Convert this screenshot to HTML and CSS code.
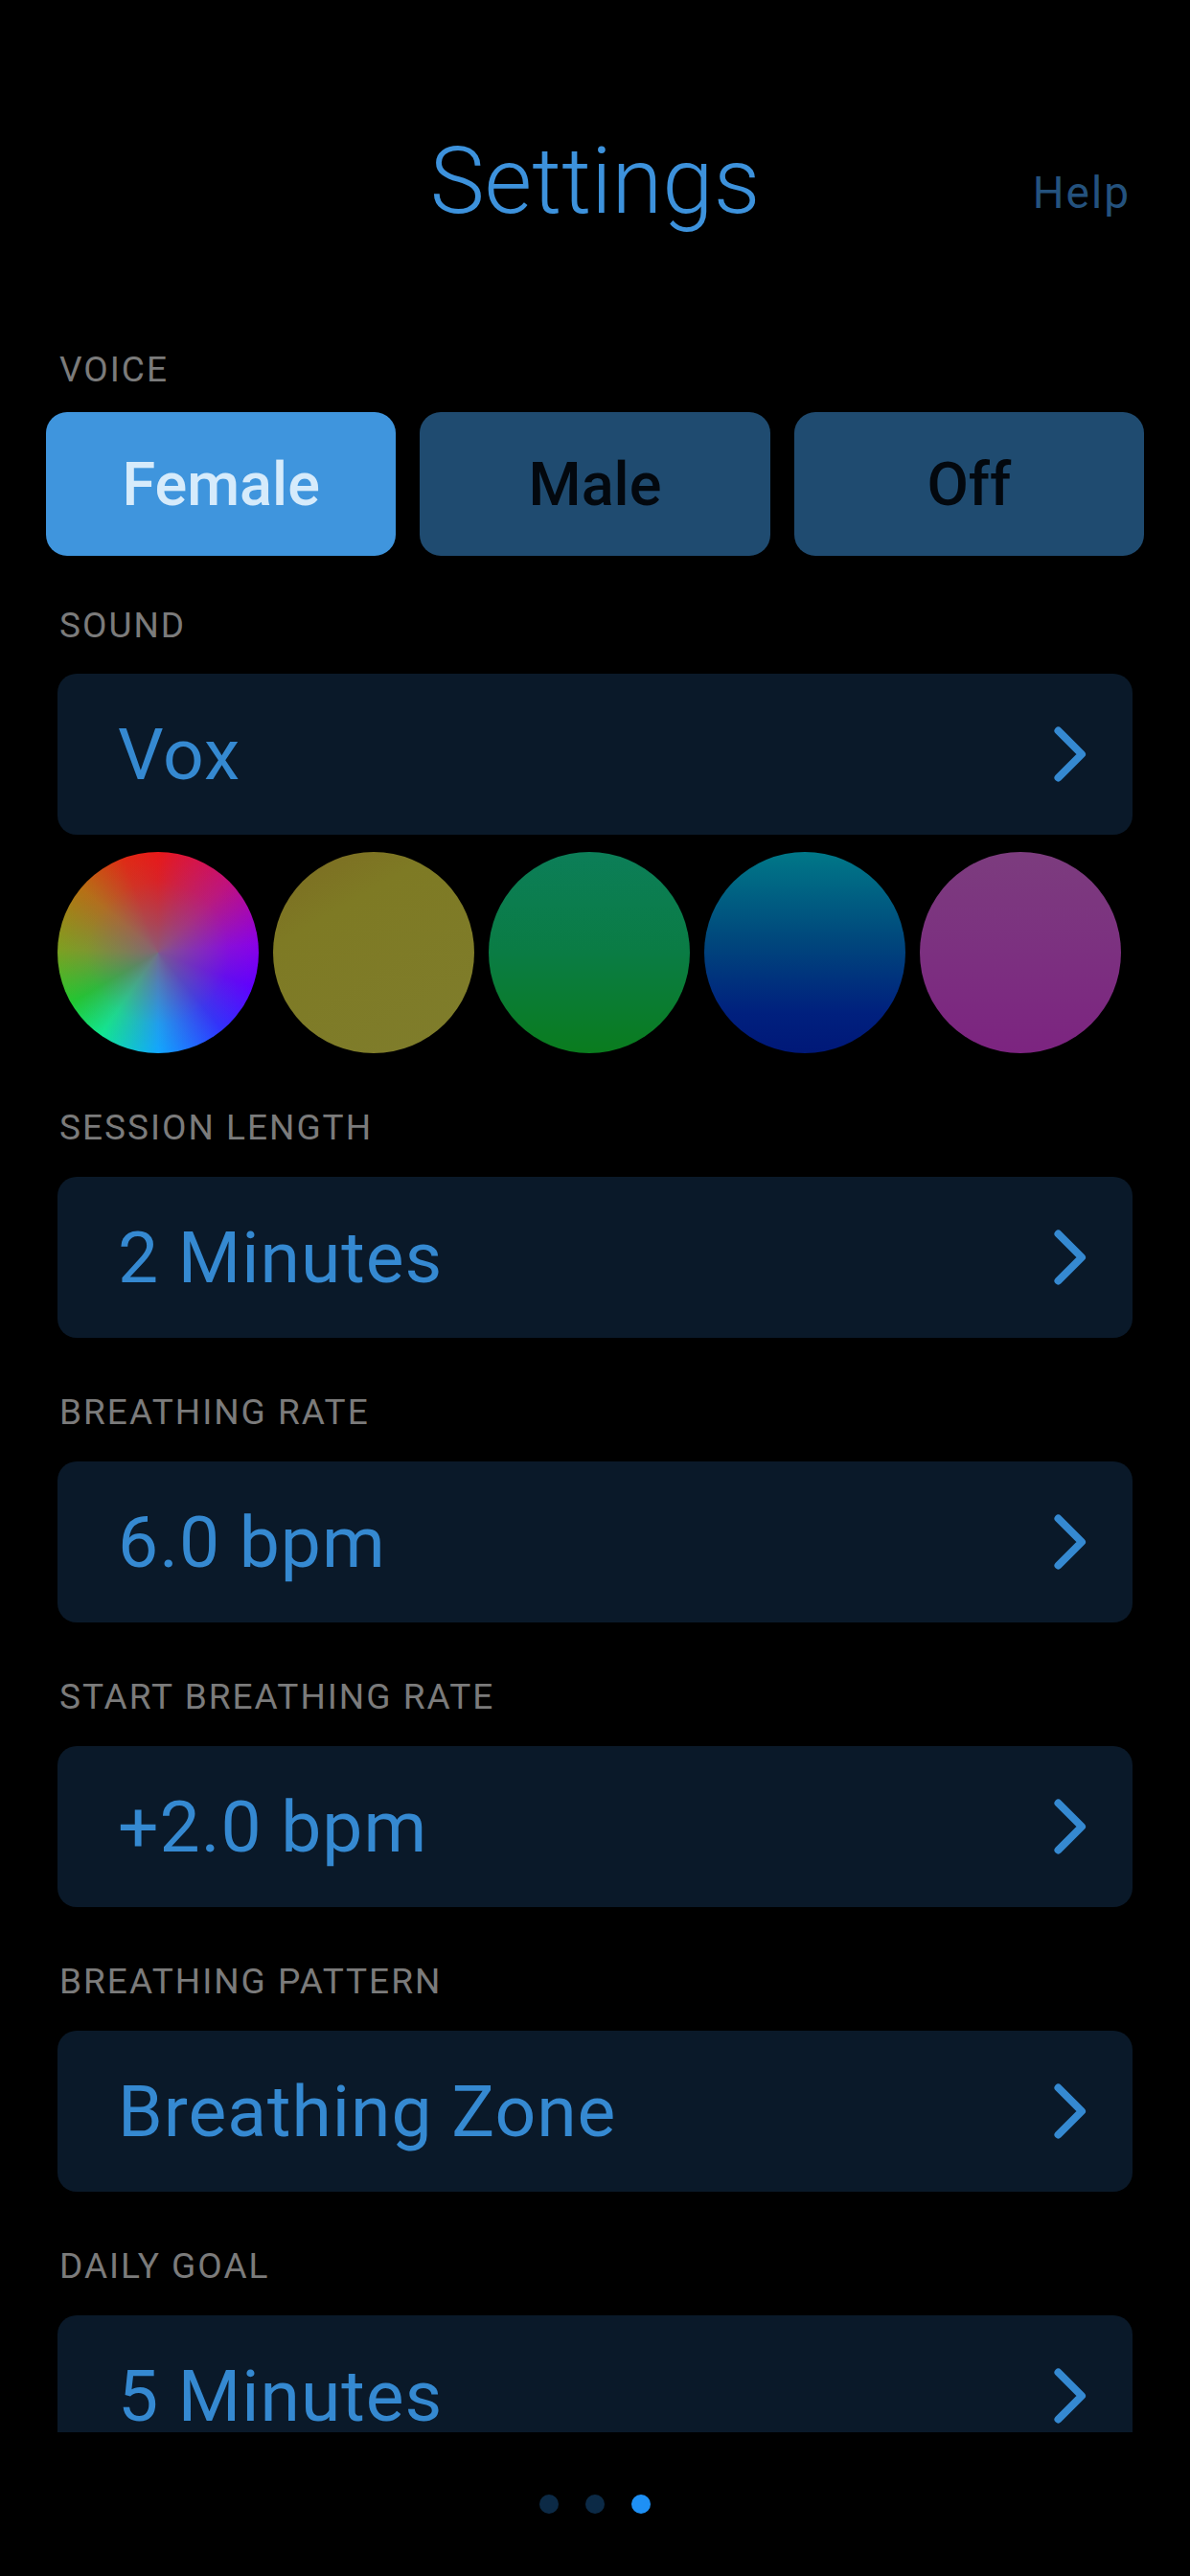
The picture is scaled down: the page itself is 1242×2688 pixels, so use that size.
FILE: index.html
```html
<!DOCTYPE html>
<html lang="en">
<head>
  <meta charset="UTF-8" />
  <meta name="viewport" content="width=device-width, initial-scale=1" />
  <title>Settings</title>
  <link rel="stylesheet" href="styles.css">
</head>
<body>
  <div class="screen">
    <!-- Top bar -->
    <header class="top-bar">
      <span></span>
      <h1 class="title">Settings</h1>
      <a class="help" href="#">Help</a>
    </header>

    <!-- Scrolling settings list -->
    <div class="scroll">
      <section class="group voice-group">
        <div class="group-label">VOICE</div>
        <div class="segmented">
          <button class="seg active">Female</button>
          <button class="seg">Male</button>
          <button class="seg">Off</button>
        </div>
      </section>

      <section class="group sound-group">
        <div class="group-label">SOUND</div>
        <a class="row" href="#">
          <span class="row-value">Vox</span>
          <svg class="chevron" viewBox="0 0 34 58" width="34" height="58"><path d="M4.5 4.5 L29 29 L4.5 53.5" /></svg>
        </a>
        <div class="swatches">
          <span class="swatch rainbow"></span>
          <span class="swatch olive"></span>
          <span class="swatch green"></span>
          <span class="swatch blue"></span>
          <span class="swatch purple"></span>
        </div>
      </section>

      <section class="group">
        <div class="group-label">SESSION LENGTH</div>
        <a class="row" href="#">
          <span class="row-value">2 Minutes</span>
          <svg class="chevron" viewBox="0 0 34 58" width="34" height="58"><path d="M4.5 4.5 L29 29 L4.5 53.5" /></svg>
        </a>
      </section>

      <section class="group">
        <div class="group-label">BREATHING RATE</div>
        <a class="row" href="#">
          <span class="row-value">6.0 bpm</span>
          <svg class="chevron" viewBox="0 0 34 58" width="34" height="58"><path d="M4.5 4.5 L29 29 L4.5 53.5" /></svg>
        </a>
      </section>

      <section class="group">
        <div class="group-label">START BREATHING RATE</div>
        <a class="row" href="#">
          <span class="row-value">+2.0 bpm</span>
          <svg class="chevron" viewBox="0 0 34 58" width="34" height="58"><path d="M4.5 4.5 L29 29 L4.5 53.5" /></svg>
        </a>
      </section>

      <section class="group">
        <div class="group-label">BREATHING PATTERN</div>
        <a class="row" href="#">
          <span class="row-value">Breathing Zone</span>
          <svg class="chevron" viewBox="0 0 34 58" width="34" height="58"><path d="M4.5 4.5 L29 29 L4.5 53.5" /></svg>
        </a>
      </section>

      <section class="group">
        <div class="group-label">DAILY GOAL</div>
        <a class="row" href="#">
          <span class="row-value">5 Minutes</span>
          <svg class="chevron" viewBox="0 0 34 58" width="34" height="58"><path d="M4.5 4.5 L29 29 L4.5 53.5" /></svg>
        </a>
      </section>
    </div>

    <!-- Page indicator -->
    <div class="pager">
      <span class="dot"></span>
      <span class="dot"></span>
      <span class="dot active"></span>
    </div>
  </div>
</body>
</html>
```

FILE: styles.css
```css
* {
  margin: 0;
  padding: 0;
  box-sizing: border-box;
}

body {
  background: #000;
  font-family: 'Roboto', 'Noto Sans', sans-serif;
  width: 1242px;
  height: 2688px;
  overflow: hidden;
}

.screen {
  display: flex;
  flex-direction: column;
}

/* ===== Top bar ===== */
.top-bar {
  display: grid;
  grid-template-columns: 1fr auto 1fr;
  align-items: center;
  height: 150px;
  margin-top: 115px;
  padding: 0 60px;
}

.title {
  font-size: 96px;
  font-weight: 300;
  line-height: 1.2;
  color: #3d92dc;
}

.help {
  justify-self: end;
  margin-top: 22px;
  margin-right: 2px;
  font-size: 46px;
  font-weight: 400;
  letter-spacing: 2px;
  color: #24527e;
  text-decoration: none;
}

/* ===== Scroll area ===== */
.scroll {
  height: 2273px;
  overflow: hidden;
  padding: 99px 60px 0;
}

.group {
  margin-bottom: 56px;
}

.group-label {
  font-size: 37px;
  line-height: 44px;
  letter-spacing: 2px;
  color: #7b7b7b;
  padding-left: 2px;
  margin-bottom: 29px;
}

.voice-group {
  margin-bottom: 51px;
}

.voice-group .group-label {
  margin-bottom: 22px;
}

.sound-group .group-label {
  margin-bottom: 28px;
}

/* Voice segmented buttons */
.segmented {
  display: grid;
  grid-template-columns: repeat(3, 1fr);
  gap: 25px;
  margin: 0 -12px;
}

.seg {
  height: 150px;
  border: none;
  border-radius: 22px;
  background: #1f4b70;
  color: #03080e;
  font-family: 'Roboto', 'Noto Sans', sans-serif;
  font-size: 63px;
  font-weight: 500;
}

.seg.active {
  background: #3f95dd;
  color: #d6ebfb;
}

/* Value rows */
.row {
  display: flex;
  align-items: center;
  justify-content: space-between;
  height: 168px;
  padding: 0 48px 0 63px;
  background: #0a1929;
  border-radius: 20px;
  text-decoration: none;
}

.row-value {
  font-size: 75px;
  font-weight: 400;
  line-height: 1.2;
  letter-spacing: 1px;
  color: #3589d1;
}

.chevron path {
  fill: none;
  stroke: #3589d1;
  stroke-width: 8;
  stroke-linecap: round;
  stroke-linejoin: round;
}

/* Sound colour swatches */
.swatches {
  display: flex;
  gap: 15px;
  margin-top: 18px;
}

.swatch {
  width: 210px;
  height: 210px;
  border-radius: 50%;
}

.swatch.rainbow {
  background:
    radial-gradient(circle at 50% 50%, rgba(128, 96, 130, 0.9) 0%, rgba(128, 96, 130, 0.55) 22%, rgba(128, 96, 130, 0.15) 50%, rgba(128, 96, 130, 0) 72%),
    conic-gradient(#e81818 0deg, #c2107c 45deg, #8a00e8 85deg, #6000ff 110deg, #3030ff 140deg, #10a8ff 180deg, #10e890 215deg, #20c830 240deg, #7ea020 272deg, #b87012 310deg, #e02a14 340deg, #e81818 360deg);
}

.swatch.olive {
  background: linear-gradient(150deg, #7c6a22 0%, #7e7a24 30%, #7f7d2c 100%);
}

.swatch.green {
  background: linear-gradient(180deg, #0c7e58 0%, #0a7c44 50%, #0a7c1e 100%);
}

.swatch.blue {
  background: linear-gradient(180deg, #007888 0%, #00467c 45%, #00207e 80%, #001878 100%);
}

.swatch.purple {
  background: linear-gradient(180deg, #7c3c7e 0%, #7c3080 50%, #7c2480 100%);
}

/* ===== Pager ===== */
.pager {
  display: flex;
  justify-content: center;
  gap: 28px;
  margin-top: 65px;
}

.dot {
  width: 20px;
  height: 20px;
  border-radius: 50%;
  background: #0c2a46;
}

.dot.active {
  background: #1e90f5;
}
```
